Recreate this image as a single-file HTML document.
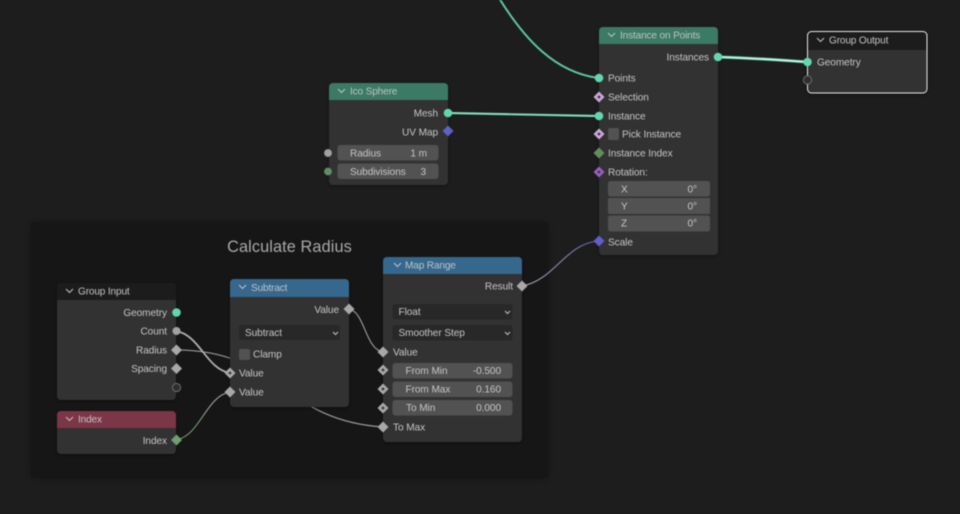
<!DOCTYPE html>
<html><head><meta charset="utf-8"><style>
html,body{margin:0;padding:0;background:#1d1d1d;width:960px;height:514px;overflow:hidden}
svg{display:block;filter:blur(.45px)}
text{font-family:"Liberation Sans",sans-serif;font-size:10.1px;fill:#c6c6c6;letter-spacing:-.08px}
.h{fill:#c2c2c2;letter-spacing:-.16px}
.e{text-anchor:end}
.c{fill:none;stroke:#c4c4c4;stroke-width:1}
.n{fill:#303030}
.f{fill:#525252}
.d{fill:#282828}
.w{fill:none;stroke-linecap:round}
</style></head><body>
<svg width="960" height="514" viewBox="0 0 960 514" xmlns="http://www.w3.org/2000/svg">
<defs>
<filter id="s" x="-20%" y="-20%" width="140%" height="140%"><feDropShadow dx="0" dy="1" stdDeviation="2.5" flood-color="#000" flood-opacity=".4"/></filter>
<filter id="fs" x="-5%" y="-5%" width="110%" height="110%"><feDropShadow dx="0" dy="1" stdDeviation="4" flood-color="#000" flood-opacity=".3"/></filter>
<linearGradient id="g1" gradientUnits="userSpaceOnUse" x1="522" y1="0" x2="598" y2="0"><stop offset="0" stop-color="#b5b5b5"/><stop offset="1" stop-color="#5f5fc0"/></linearGradient>
<linearGradient id="g2" gradientUnits="userSpaceOnUse" x1="176" y1="0" x2="230" y2="0"><stop offset="0" stop-color="#5f8f5f"/><stop offset="1" stop-color="#b5b5b5"/></linearGradient>
</defs>
<rect width="960" height="514" fill="#1d1d1d"/>
<rect x="31" y="222" width="517" height="256" rx="3" fill="#121212" filter="url(#fs)"/>
<text x="289.500" y="252" style="font-size:16.3px;fill:#a9a9a9;letter-spacing:.1px" text-anchor="middle">Calculate Radius</text>

<path class="w" d="M499,-2C525,40 555,72 598,78" stroke="#5cc8a2" stroke-width="2"/>
<path class="w" d="M448,113C500,114 550,115 598,116" stroke="#5cc8a2" stroke-width="2.2"/>
<path class="w" d="M448,113C500,114 550,115 598,116" stroke="#b8ecd8" stroke-width=".7"/>
<path class="w" d="M718,57C750,58 780,60 807,62" stroke="#5fcca6" stroke-width="3"/>
<path class="w" d="M718,57C750,58 780,60 807,62" stroke="#e2f8ef" stroke-width="1.3"/>
<path class="w" d="M522,286C555,280 565,244 598,241" stroke="url(#g1)" stroke-width="1.1"/>
<path class="w" d="M349,309C365,312 365,349 383,352" stroke="#a0a0a0" stroke-width="1.1"/>
<path class="w" d="M176,350C280,350 280,420 383,427" stroke="#a8a8a8" stroke-width="1.1"/>
<path class="w" d="M176,331C200,335 206,369 230,373" stroke="#b0b0b0" stroke-width="1.8"/>
<path class="w" d="M176,440C200,436 206,396 230,392" stroke="url(#g2)" stroke-width="1.1"/>

<!-- Instance on Points -->
<g filter="url(#s)"><rect class="n" x="599" y="27" width="119" height="228" rx="4"/></g>
<path d="M599,44V31a4,4 0 0 1 4,-4H714a4,4 0 0 1 4,4V44Z" fill="#3b7a64"/>
<polyline class="c" points="608,33 611.500,36.500 615,33"/>
<text class="h" x="620" y="38.500">Instance on Points</text>
<text class="e" x="709" y="60.500">Instances</text>
<text x="608" y="81.500">Points</text>
<text x="608" y="100.500">Selection</text>
<text x="608" y="119.500">Instance</text>
<rect class="f" x="608" y="128" width="11" height="12" rx="2"/>
<text x="622" y="137.500">Pick Instance</text>
<text x="608" y="156.500">Instance Index</text>
<text x="608" y="175.500">Rotation:</text>
<rect class="f" x="608" y="181" width="102" height="15.500" rx="2.500"/>
<rect class="f" x="608" y="198" width="102" height="16" rx="1"/>
<rect class="f" x="608" y="215.500" width="102" height="16" rx="2.500"/>
<text x="621" y="192.500">X</text><text class="e" x="697" y="192.500">0°</text>
<text x="621" y="209.500">Y</text><text class="e" x="697" y="209.500">0°</text>
<text x="621" y="226.500">Z</text><text class="e" x="697" y="226.500">0°</text>
<text x="608" y="245.500">Scale</text>

<!-- Group Output -->
<g filter="url(#s)"><rect class="n" x="807" y="31.500" width="120" height="62" rx="4"/></g>
<path d="M807.500,50V36a4,4 0 0 1 4,-4H922.500a4,4 0 0 1 4,4V50Z" fill="#1c1c1c"/>
<rect x="807.500" y="31.500" width="119.500" height="61.500" rx="4" fill="none" stroke="#e8e8e8" stroke-width="1"/>
<polyline class="c" points="817,38 820.500,41.500 824,38"/>
<text class="h" x="829" y="43.500">Group Output</text>
<text x="817" y="65.500">Geometry</text>

<!-- Ico Sphere -->
<g filter="url(#s)"><rect class="n" x="329" y="83" width="119" height="102" rx="4"/></g>
<path d="M329,100V87a4,4 0 0 1 4,-4H444a4,4 0 0 1 4,4V100Z" fill="#3b7a64"/>
<polyline class="c" points="338,89 341.500,92.500 345,89"/>
<text class="h" x="350" y="94.500">Ico Sphere</text>
<text class="e" x="438" y="116.500">Mesh</text>
<text class="e" x="438" y="135.500">UV Map</text>
<rect class="f" x="337.500" y="145" width="101" height="15.500" rx="3"/>
<rect class="f" x="337.500" y="163.500" width="101" height="15.500" rx="3"/>
<text x="350" y="156.500">Radius</text><text class="e" x="427" y="156.500">1 m</text>
<text x="350" y="175">Subdivisions</text><text class="e" x="426" y="175">3</text>

<!-- Group Input -->
<g filter="url(#s)"><rect class="n" x="57" y="283" width="119" height="117" rx="4"/></g>
<path d="M57,300V287a4,4 0 0 1 4,-4H172a4,4 0 0 1 4,4V300Z" fill="#1c1c1c"/>
<polyline class="c" points="66,289 69.500,292.500 73,289"/>
<text class="h" x="78" y="294.500">Group Input</text>
<text class="e" x="167" y="316">Geometry</text>
<text class="e" x="167" y="334.500">Count</text>
<text class="e" x="167" y="353.500">Radius</text>
<text class="e" x="167" y="372">Spacing</text>

<!-- Index -->
<g filter="url(#s)"><rect class="n" x="57" y="411" width="119" height="43" rx="4"/></g>
<path d="M57,428V415a4,4 0 0 1 4,-4H172a4,4 0 0 1 4,4V428Z" fill="#7d3548"/>
<polyline class="c" points="66,417 69.500,420.500 73,417"/>
<text class="h" x="78" y="422.500">Index</text>
<text class="e" x="167" y="444">Index</text>

<!-- Subtract -->
<g filter="url(#s)"><rect class="n" x="230" y="279" width="119" height="128" rx="4"/></g>
<path d="M230,297V283a4,4 0 0 1 4,-4H345a4,4 0 0 1 4,4V297Z" fill="#35688c"/>
<polyline class="c" points="239,285 242.500,288.500 246,285"/>
<text class="h" x="251" y="291">Subtract</text>
<text class="e" x="339" y="313">Value</text>
<rect class="d" x="239" y="325" width="101" height="15" rx="2.500"/>
<text x="245" y="336">Subtract</text>
<polyline class="c" points="333,332 335.500,334.500 338,332"/>
<rect class="f" x="239" y="349" width="11" height="11" rx="2"/>
<text x="253" y="357.500">Clamp</text>
<text x="239" y="376.500">Value</text>
<text x="239" y="395.500">Value</text>

<!-- Map Range -->
<g filter="url(#s)"><rect class="n" x="383" y="257" width="139" height="185" rx="4"/></g>
<path d="M383,274V261a4,4 0 0 1 4,-4H518a4,4 0 0 1 4,4V274Z" fill="#35688c"/>
<polyline class="c" points="394,263 397.500,266.500 401,263"/>
<text class="h" x="405" y="268.500">Map Range</text>
<text class="e" x="513" y="289.500">Result</text>
<rect class="d" x="392.500" y="304" width="120" height="15.500" rx="2.500"/>
<text x="398.500" y="315">Float</text>
<polyline class="c" points="505,311 507.500,313.500 510,311"/>
<rect class="d" x="392.500" y="325" width="120" height="15.500" rx="2.500"/>
<text x="398.500" y="336">Smoother Step</text>
<polyline class="c" points="505,332 507.500,334.500 510,332"/>
<text x="393" y="355.500">Value</text>
<rect class="f" x="392.500" y="363" width="120" height="15.500" rx="3"/>
<rect class="f" x="392.500" y="381.500" width="120" height="15.500" rx="3"/>
<rect class="f" x="392.500" y="400" width="120" height="15.500" rx="3"/>
<text x="405.500" y="374">From Min</text><text class="e" x="501" y="374">-0.500</text>
<text x="405.500" y="392.500">From Max</text><text class="e" x="501" y="392.500">0.160</text>
<text x="406" y="411">To Min</text><text class="e" x="501" y="411">0.000</text>
<text x="393" y="430.500">To Max</text>

<!-- sockets: circles -->
<circle cx="718" cy="57" r="4.300" fill="#63d6ae"/>
<circle cx="599" cy="78" r="4.300" fill="#63d6ae"/>
<circle cx="599" cy="116" r="4.300" fill="#63d6ae"/>
<circle cx="807.500" cy="62" r="4.300" fill="#63d6ae"/>
<circle cx="448" cy="113" r="4.300" fill="#63d6ae"/>
<circle cx="328" cy="153" r="3.900" fill="#a1a1a1"/>
<circle cx="328" cy="171.500" r="3.900" fill="#5f8f5f"/>
<circle cx="176.500" cy="312.500" r="4.300" fill="#63d6ae"/>
<circle cx="176.500" cy="331" r="4" fill="#a1a1a1"/>
<circle cx="807.500" cy="80" r="4.100" fill="#2e2e2e" stroke="#6c6c6c" stroke-width="1"/>
<circle cx="176.500" cy="387.500" r="4.100" fill="#2e2e2e" stroke="#6c6c6c" stroke-width="1"/>

<!-- sockets: diamonds -->
<path d="M599,91.500l5.500,5.500l-5.500,5.500l-5.500,-5.500Z" fill="#cda6dc"/>
<path d="M599,128.500l5.500,5.500l-5.500,5.500l-5.500,-5.500Z" fill="#cda6dc"/>
<path d="M599,147.500l5.500,5.500l-5.500,5.500l-5.500,-5.500Z" fill="#5f8f5f"/>
<path d="M599,166.500l5.500,5.500l-5.500,5.500l-5.500,-5.500Z" fill="#9a5fc0"/>
<path d="M599,235.500l5.500,5.500l-5.500,5.500l-5.500,-5.500Z" fill="#5f5fc8"/>
<path d="M448,125.500l5.500,5.500l-5.500,5.500l-5.500,-5.500Z" fill="#5f5fc8"/>
<path d="M176.500,344.500l5.500,5.500l-5.500,5.500l-5.500,-5.500Z" fill="#a8a8a8"/>
<path d="M176.500,363l5.500,5.500l-5.500,5.500l-5.500,-5.500Z" fill="#a8a8a8"/>
<path d="M176.500,434.500l5.500,5.500l-5.500,5.500l-5.500,-5.500Z" fill="#6f9f6f"/>
<path d="M230,367.500l5.500,5.500l-5.500,5.500l-5.500,-5.500Z" fill="#a8a8a8"/>
<path d="M230,386.500l5.500,5.500l-5.500,5.500l-5.500,-5.500Z" fill="#a8a8a8"/>
<path d="M349,303.500l5.500,5.500l-5.500,5.500l-5.500,-5.500Z" fill="#a8a8a8"/>
<path d="M383,346.500l5.500,5.500l-5.500,5.500l-5.500,-5.500Z" fill="#a8a8a8"/>
<path d="M383,364.500l5.500,5.500l-5.500,5.500l-5.500,-5.500Z" fill="#a8a8a8"/>
<path d="M383,383.500l5.500,5.500l-5.500,5.500l-5.500,-5.500Z" fill="#a8a8a8"/>
<path d="M383,402.500l5.500,5.500l-5.500,5.500l-5.500,-5.500Z" fill="#a8a8a8"/>
<path d="M383,421.500l5.500,5.500l-5.500,5.500l-5.500,-5.500Z" fill="#a8a8a8"/>
<path d="M522,280.500l5.500,5.500l-5.500,5.500l-5.500,-5.500Z" fill="#a8a8a8"/>
<!-- diamond inner dots -->
<g fill="#3a3a3a">
<path d="M599,95.200l1.800,1.800l-1.800,1.800l-1.800,-1.800Z"/>
<path d="M599,132.200l1.800,1.800l-1.800,1.800l-1.800,-1.800Z"/>
<path d="M599,170.200l1.800,1.800l-1.800,1.800l-1.800,-1.800Z"/>
<path d="M230,371.200l1.800,1.800l-1.800,1.800l-1.800,-1.800Z"/>
<path d="M383,368.200l1.800,1.800l-1.800,1.800l-1.800,-1.800Z"/>
<path d="M383,387.200l1.800,1.800l-1.800,1.800l-1.800,-1.800Z"/>
<path d="M383,406.200l1.800,1.800l-1.800,1.800l-1.800,-1.800Z"/>
</g>
</svg>
</body></html>
